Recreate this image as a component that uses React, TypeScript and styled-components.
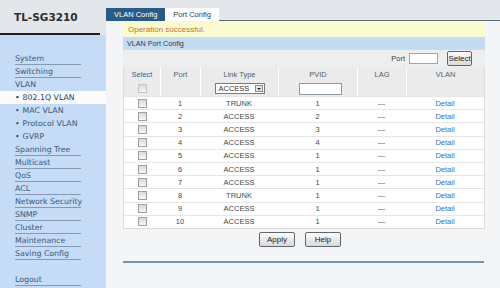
import React from 'react';
import styled, { createGlobalStyle } from 'styled-components';

const GlobalStyle = createGlobalStyle`
  html, body { margin: 0; padding: 0; }
  body {
    width: 500px;
    height: 288px;
    overflow: hidden;
    background: #f4f5f6;
    font-family: "Liberation Sans", Arial, sans-serif;
  }
`;

const Page = styled.div`
  display: flex;
  width: 500px;
  height: 288px;
`;

const Sidebar = styled.aside`
  width: 106px;
  flex: none;
  display: flex;
  flex-direction: column;
  background: #c6dbf5;
  font-family: "DejaVu Sans", Verdana, sans-serif;
  font-size: 7.8px;
  color: #38587f;
`;

const Brand = styled.div`
  height: 35px;
  background: #e3e7eb;
  display: flex;
  flex-direction: column;
`;

const BrandName = styled.div`
  height: 33px;
  display: flex;
  align-items: center;
  padding-left: 14px;
  font-weight: bold;
  font-size: 10.5px;
  color: #2e2e2e;
`;

const BrandRule = styled.div`
  width: 100px;
  height: 2px;
  background: #1f1f1f;
`;

const Nav = styled.nav`
  display: flex;
  flex-direction: column;
  padding-top: 17px;
`;

const NavItem = styled.div<{ $line?: boolean }>`
  height: 13px;
  box-sizing: border-box;
  margin: 0 25px 0 15px;
  display: flex;
  align-items: center;
  white-space: nowrap;
  border-bottom: 1px solid ${p => (p.$line === false ? 'transparent' : '#8599b3')};
`;

const SubItem = styled.div<{ $active?: boolean }>`
  height: 13px;
  padding-left: 15px;
  display: flex;
  align-items: center;
  gap: 3px;
  white-space: nowrap;
  background: ${p => (p.$active ? '#fbfbfb' : 'transparent')};
  color: ${p => (p.$active ? '#24405f' : '#38587f')};
`;

const NavGap = styled.div`
  height: 13px;
`;

const Main = styled.main`
  flex: 1;
  display: flex;
  flex-direction: column;
  background: #f4f5f6;
`;

const TabStrip = styled.div`
  height: 21px;
  background: #e3e7eb;
  display: flex;
  align-items: flex-end;
`;

const Tab = styled.div<{ $active?: boolean }>`
  height: 13px;
  padding: 0 8px;
  display: flex;
  align-items: center;
  font-size: 7.5px;
  background: ${p => (p.$active ? '#fdfdfd' : '#295b87')};
  color: ${p => (p.$active ? '#29445f' : '#ffffff')};
`;

const TabFill = styled.div`
  flex: 1;
  height: 13px;
  box-sizing: border-box;
  border-bottom: 1px solid #5b6a78;
`;

const Panel = styled.section`
  margin: 1px 0 0 17px;
  width: 362px;
  display: flex;
  flex-direction: column;
`;

const Notice = styled.div`
  height: 15px;
  background: #fbfbd0;
  color: #c7712c;
  font-size: 8px;
  padding-left: 5px;
  display: flex;
  align-items: center;
`;

const TitleBar = styled.div`
  height: 13px;
  background: #c5dbf4;
  color: #2b3d55;
  font-size: 7.2px;
  padding-left: 4px;
  display: flex;
  align-items: center;
`;

const Toolbar = styled.div`
  height: 17px;
  background: #eeeeee;
  display: flex;
  align-items: center;
  justify-content: flex-end;
  padding-right: 13px;
  font-size: 7.5px;
  color: #444;
`;

const PortInput = styled.div`
  width: 29px;
  height: 11px;
  box-sizing: border-box;
  margin: 0 9px 0 4px;
  background: #fff;
  border: 1px solid #9aa6b2;
`;

const Btn = styled.button<{ $w: number }>`
  width: ${p => p.$w}px;
  height: 15px;
  padding: 0;
  box-sizing: border-box;
  border: 1px solid #5e6670;
  border-radius: 2px;
  background: linear-gradient(#fbfbfb, #dadada);
  font-family: "Liberation Sans", Arial, sans-serif;
  font-size: 8px;
  color: #222;
`;

const Table = styled.div`
  width: 362px;
  box-sizing: border-box;
  border: 1px solid #dcdcdc;
  border-top: none;
`;

const Row = styled.div<{ $kind: 'head' | 'filter' | 'data' }>`
  display: grid;
  grid-template-columns: 36px 40px 78px 79px 49px 78px;
  height: ${p => (p.$kind === 'head' ? '14px' : p.$kind === 'filter' ? '15px' : '13.2px')};
  box-sizing: border-box;
  background: ${p => (p.$kind === 'data' ? '#ffffff' : '#ebebeb')};
  border-top: ${p => (p.$kind === 'data' ? '1px solid #e6e6e6' : 'none')};
  font-size: 7.5px;
  color: ${p => (p.$kind === 'head' ? '#56606c' : '#474747')};
`;

const Cell = styled.div<{ $sep?: boolean; $tone?: 'blue' | 'link' }>`
  display: flex;
  align-items: center;
  justify-content: center;
  border-left: ${p => (p.$sep ? '1px solid #fff' : 'none')};
  color: ${p => (p.$tone === 'blue' ? '#3e5f93' : p.$tone === 'link' ? '#3a6cc4' : 'inherit')};
`;

const Check = styled.span<{ $dim?: boolean }>`
  display: block;
  width: 9px;
  height: 9px;
  box-sizing: border-box;
  border: 1px solid ${p => (p.$dim ? '#c4c4c4' : '#a0a0a0')};
  background: linear-gradient(#d9d9d9, #f6f6f6);
`;

const SelectBox = styled.div`
  width: 50px;
  height: 11px;
  box-sizing: border-box;
  border: 1px solid #7b7b7b;
  background: #fff;
  display: flex;
  align-items: center;
  justify-content: space-between;
  padding: 0 1px 0 3px;
  font-size: 7.5px;
  color: #333;
`;

const DropBtn = styled.span`
  width: 8px;
  height: 7px;
  box-sizing: border-box;
  border: 1px solid #8c8c8c;
  background: #e4e4e4;
  display: flex;
  align-items: center;
  justify-content: center;
  &::after {
    content: '';
    border-left: 2px solid transparent;
    border-right: 2px solid transparent;
    border-top: 2px solid #222;
  }
`;

const PvidInput = styled.div`
  width: 43px;
  height: 12px;
  box-sizing: border-box;
  border: 1px solid #8e9aa6;
  background: #fff;
  margin-left: 4px;
`;

const Actions = styled.div`
  display: flex;
  justify-content: center;
  gap: 10px;
  padding: 3px 8px 0 0;
`;

const BottomRule = styled.div`
  margin-top: 14px;
  width: 361px;
  height: 2px;
  background: #6f95b0;
`;

const ports = [
  { port: 1, type: 'TRUNK', pvid: 1 },
  { port: 2, type: 'ACCESS', pvid: 2 },
  { port: 3, type: 'ACCESS', pvid: 3 },
  { port: 4, type: 'ACCESS', pvid: 4 },
  { port: 5, type: 'ACCESS', pvid: 1 },
  { port: 6, type: 'ACCESS', pvid: 1 },
  { port: 7, type: 'ACCESS', pvid: 1 },
  { port: 8, type: 'TRUNK', pvid: 1 },
  { port: 9, type: 'ACCESS', pvid: 1 },
  { port: 10, type: 'ACCESS', pvid: 1 },
];

const topMenu = ['System', 'Switching'];
const subMenu = ['802.1Q VLAN', 'MAC VLAN', 'Protocol VLAN', 'GVRP'];
const lowerMenu = ['Spanning Tree', 'Multicast', 'QoS', 'ACL', 'Network Security', 'SNMP', 'Cluster', 'Maintenance', 'Saving Config'];

export default function App() {
  return (
    <>
      <GlobalStyle />
      <Page>
        <Sidebar>
          <Brand>
            <BrandName>TL-SG3210</BrandName>
            <BrandRule />
          </Brand>
          <Nav>
            {topMenu.map(m => <NavItem key={m}>{m}</NavItem>)}
            <NavItem $line={false}>VLAN</NavItem>
            {subMenu.map((m, i) => (
              <SubItem key={m} $active={i === 0}><span>•</span>{m}</SubItem>
            ))}
            {lowerMenu.map(m => <NavItem key={m}>{m}</NavItem>)}
            <NavGap />
            <NavItem>Logout</NavItem>
          </Nav>
        </Sidebar>

        <Main>
          <TabStrip>
            <Tab>VLAN Config</Tab>
            <Tab $active>Port Config</Tab>
            <TabFill />
          </TabStrip>

          <Panel>
            <Notice>Operation successful.</Notice>
            <TitleBar>VLAN Port Config</TitleBar>
            <Toolbar>
              Port
              <PortInput />
              <Btn $w={25}>Select</Btn>
            </Toolbar>

            <Table>
              <Row $kind="head">
                <Cell $tone="blue">Select</Cell>
                <Cell $sep>Port</Cell>
                <Cell $sep>Link Type</Cell>
                <Cell $sep>PVID</Cell>
                <Cell $sep>LAG</Cell>
                <Cell $sep>VLAN</Cell>
              </Row>
              <Row $kind="filter">
                <Cell><Check $dim /></Cell>
                <Cell $sep />
                <Cell $sep>
                  <SelectBox>ACCESS<DropBtn /></SelectBox>
                </Cell>
                <Cell $sep><PvidInput /></Cell>
                <Cell $sep />
                <Cell $sep />
              </Row>
              {ports.map(p => (
                <Row $kind="data" key={p.port}>
                  <Cell><Check /></Cell>
                  <Cell>{p.port}</Cell>
                  <Cell>{p.type}</Cell>
                  <Cell>{p.pvid}</Cell>
                  <Cell>---</Cell>
                  <Cell $tone="link">Detail</Cell>
                </Row>
              ))}
            </Table>

            <Actions>
              <Btn $w={36}>Apply</Btn>
              <Btn $w={36}>Help</Btn>
            </Actions>
            <BottomRule />
          </Panel>
        </Main>
      </Page>
    </>
  );
}
